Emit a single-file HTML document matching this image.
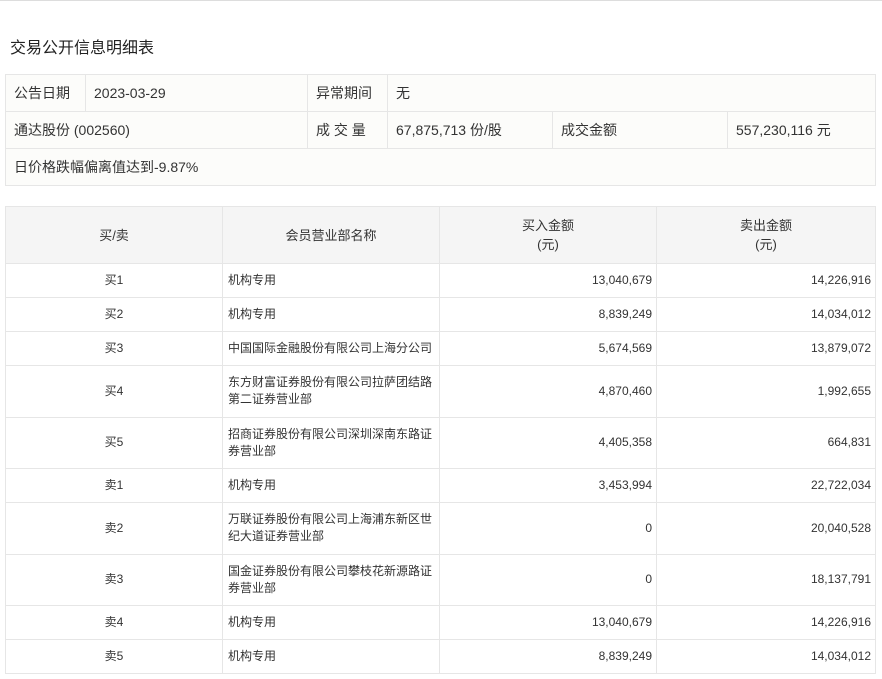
<!DOCTYPE html><html><head><meta charset="utf-8"><style>
body{margin:0;width:882px;height:679px;background:#fff;font-family:"Liberation Sans","Noto Sans CJK SC",sans-serif;color:#333;position:relative;overflow:hidden}
.top{position:absolute;left:0;top:0;width:882px;height:1px;background:#ddd}
h1{position:absolute;left:10px;top:34px;margin:0;font-size:16px;font-weight:normal;color:#222}
table{position:absolute;border-collapse:collapse;table-layout:fixed}
td,th{border:1px solid #e6e6e6;padding:0 8px;font-weight:normal}
.info{left:5px;top:74px;width:870px;background:#fcfcfa;font-size:14px}
.info td{height:36px}
.main{left:5px;top:206px;width:870px;font-size:12px}
.main th{background:#f5f5f5;height:56px;font-size:13px;line-height:19px;text-align:center}
.main td{height:33px;line-height:17px}
.main td.c{text-align:center}.main td.r{text-align:right;padding-right:4px}
.main td.n{padding-left:5px;padding-right:1px}
.main tr.t td{height:50.5px}
</style></head><body><div class="top"></div>
<h1>交易公开信息明细表</h1>
<table class="info"><col style="width:80px"><col style="width:222px"><col style="width:80px"><col style="width:165px"><col style="width:175px"><col style="width:148px">
<tr><td>公告日期</td><td>2023-03-29</td><td>异常期间</td><td colspan="3">无</td></tr>
<tr><td colspan="2">通达股份 (002560)</td><td>成 交 量</td><td>67,875,713 份/股</td><td>成交金额</td><td>557,230,116 元</td></tr>
<tr><td colspan="6">日价格跌幅偏离值达到-9.87%</td></tr></table>
<table class="main"><col style="width:217px"><col style="width:217px"><col style="width:217px"><col style="width:219px">
<tr><th>买/卖</th><th>会员营业部名称</th><th>买入金额<br>(元)</th><th>卖出金额<br>(元)</th></tr>
<tr><td class="c">买1</td><td class="n">机构专用</td><td class="r">13,040,679</td><td class="r">14,226,916</td></tr>
<tr><td class="c">买2</td><td class="n">机构专用</td><td class="r">8,839,249</td><td class="r">14,034,012</td></tr>
<tr><td class="c">买3</td><td class="n" style="white-space:nowrap">中国国际金融股份有限公司上海分公司</td><td class="r">5,674,569</td><td class="r">13,879,072</td></tr>
<tr class="t"><td class="c">买4</td><td class="n">东方财富证券股份有限公司拉萨团结路<br>第二证券营业部</td><td class="r">4,870,460</td><td class="r">1,992,655</td></tr>
<tr class="t"><td class="c">买5</td><td class="n">招商证券股份有限公司深圳深南东路证<br>券营业部</td><td class="r">4,405,358</td><td class="r">664,831</td></tr>
<tr><td class="c">卖1</td><td class="n">机构专用</td><td class="r">3,453,994</td><td class="r">22,722,034</td></tr>
<tr class="t"><td class="c">卖2</td><td class="n">万联证券股份有限公司上海浦东新区世<br>纪大道证券营业部</td><td class="r">0</td><td class="r">20,040,528</td></tr>
<tr class="t"><td class="c">卖3</td><td class="n">国金证券股份有限公司攀枝花新源路证<br>券营业部</td><td class="r">0</td><td class="r">18,137,791</td></tr>
<tr><td class="c">卖4</td><td class="n">机构专用</td><td class="r">13,040,679</td><td class="r">14,226,916</td></tr>
<tr><td class="c">卖5</td><td class="n">机构专用</td><td class="r">8,839,249</td><td class="r">14,034,012</td></tr>
</table></body></html>
